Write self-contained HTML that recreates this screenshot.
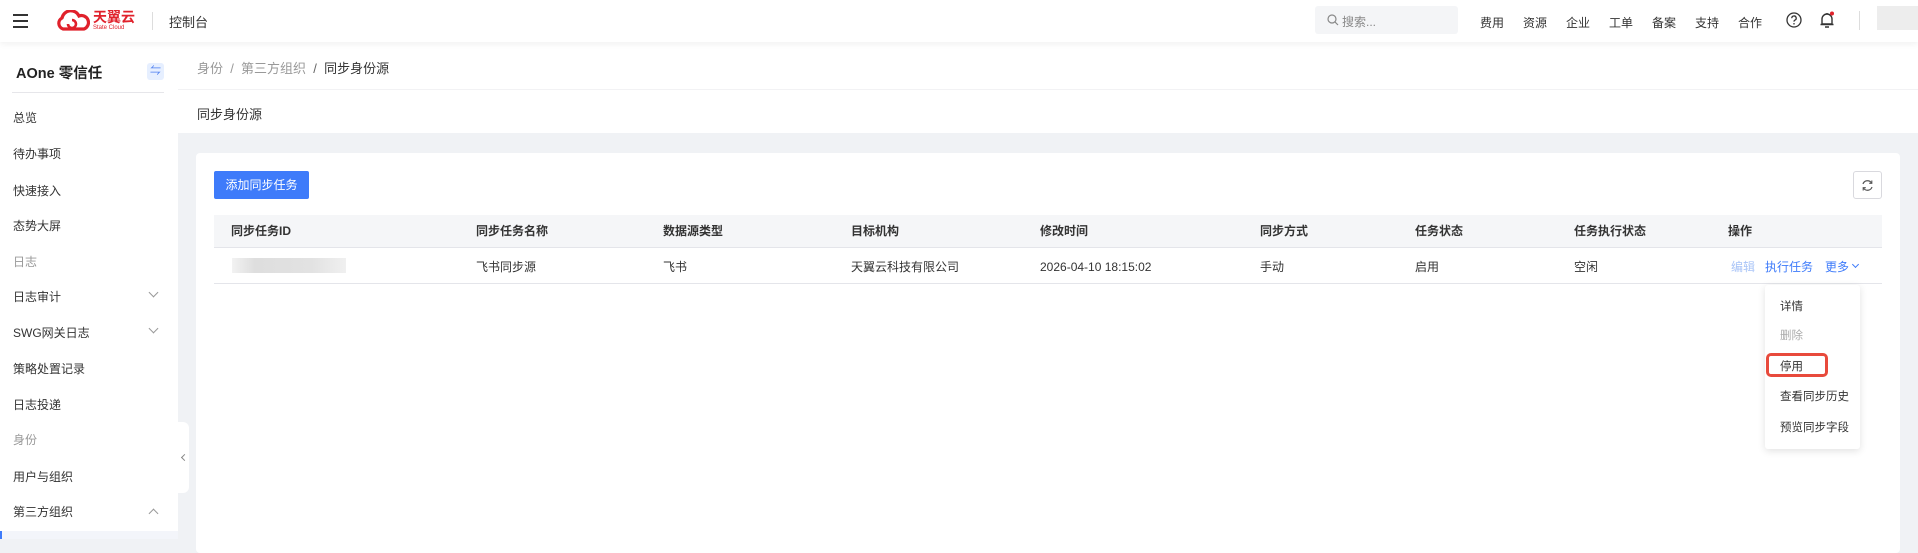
<!DOCTYPE html>
<html><head><meta charset="utf-8"><style>
*{margin:0;padding:0;box-sizing:border-box}
body{width:1918px;height:539px;overflow:hidden;background:#f0f2f5;font-family:"Liberation Sans","Noto Sans CJK SC",sans-serif;font-size:12px;color:#333;position:relative}
.abs{position:absolute}
.hdr{left:0;top:0;width:1918px;height:42px;background:#fff;box-shadow:0 2px 6px rgba(0,0,0,.06);z-index:5}
.side{left:0;top:42px;width:178px;height:497px;background:#fff}
.mi{position:absolute;left:13px;font-size:12px;color:#333;line-height:14px}
.grey{color:#999}
.chev{position:absolute;left:150px;width:7px;height:7px;border-right:1px solid #999;border-bottom:1px solid #999}
.th{position:absolute;top:224px;font-weight:bold;color:#333;line-height:14px}
.td{position:absolute;top:260px;color:#333;line-height:14px}
.nav{position:absolute;top:14px;font-size:12px;color:#333}
.dd{position:absolute;left:1780px;line-height:14px;color:#333;font-size:11.5px}
</style></head><body>
<div class="abs hdr">
  <div class="abs" style="left:13px;top:14px;width:15px;height:2px;background:#333"></div>
  <div class="abs" style="left:13px;top:20px;width:15px;height:2px;background:#333"></div>
  <div class="abs" style="left:13px;top:26px;width:15px;height:2px;background:#333"></div>
  <svg class="abs" style="left:54px;top:10px" width="36" height="22" viewBox="0 0 36 22"><path d="M9 19 A6 6 0 0 1 8 8 A9 9 0 0 1 25 6 A6.5 6.5 0 0 1 30 19 Z" fill="none" stroke="#e0212b" stroke-width="3.2"/><path d="M14 14 a4 4 0 1 0 4-4" fill="none" stroke="#e0212b" stroke-width="2.6"/></svg>
  <div class="abs" style="left:93px;top:9px;font-size:14px;font-weight:bold;color:#e0212b;line-height:16px">天翼云</div>
  <div class="abs" style="left:93px;top:25px;font-size:6px;color:#e0212b;line-height:7px">State Cloud</div>
  <div class="abs" style="left:152px;top:12px;width:1px;height:18px;background:#ddd"></div>
  <div class="abs" style="left:169px;top:12px;font-size:13px;color:#333">控制台</div>
  <div class="abs" style="left:1315px;top:6px;width:143px;height:28px;background:#f4f5f7;border-radius:3px"></div>
  <svg class="abs" style="left:1327px;top:14px" width="12" height="12" viewBox="0 0 12 12"><circle cx="5" cy="5" r="4" fill="none" stroke="#888" stroke-width="1.2"/><path d="M8 8 L11 11" stroke="#888" stroke-width="1.2"/></svg>
  <div class="abs" style="left:1342px;top:13px;color:#888">搜索...</div>
  <div class="nav" style="left:1480px">费用</div><div class="nav" style="left:1523px">资源</div><div class="nav" style="left:1566px">企业</div><div class="nav" style="left:1609px">工单</div><div class="nav" style="left:1652px">备案</div><div class="nav" style="left:1695px">支持</div><div class="nav" style="left:1738px">合作</div>
  <svg class="abs" style="left:1786px;top:12px" width="16" height="16" viewBox="0 0 16 16"><circle cx="8" cy="8" r="7" fill="none" stroke="#333" stroke-width="1.3"/><path d="M5.8 6.2a2.2 2.2 0 1 1 3 2c-.6.3-.8.7-.8 1.4" fill="none" stroke="#333" stroke-width="1.3"/><circle cx="8" cy="11.8" r=".8" fill="#333"/></svg>
  <svg class="abs" style="left:1819px;top:11px" width="16" height="18" viewBox="0 0 16 18"><path d="M3 13 V8 a5 5 0 0 1 10 0 V13 Z M1.5 13.5 H14.5 M6 16 H10 M8 2 V3" fill="none" stroke="#333" stroke-width="1.4"/><circle cx="13" cy="2.5" r="2" fill="#e0212b"/></svg>
  <div class="abs" style="left:1859px;top:11px;width:1px;height:19px;background:#ddd"></div>
  <div class="abs" style="left:1877px;top:6px;width:41px;height:24px;background:#ededed"></div>
</div>
<div class="abs side">
  <div class="abs" style="left:16px;top:20px;font-size:14.5px;font-weight:bold;color:#222">AOne 零信任</div>
  <div class="abs" style="left:147px;top:21px;width:17px;height:17px;background:#e6efff;border-radius:3px;color:#4a7cf0;font-size:11px;text-align:center;line-height:17px">⇋</div>
  <div class="abs" style="left:12px;top:50px;width:152px;height:1px;background:#e6e6ea"></div>
</div>
<div class="mi" style="top:111px">总览</div>
<div class="mi" style="top:147px">待办事项</div>
<div class="mi" style="top:184px">快速接入</div>
<div class="mi" style="top:219px">态势大屏</div>
<div class="mi grey" style="top:255px">日志</div>
<div class="mi" style="top:290px">日志审计</div><div class="chev" style="top:289px;transform:rotate(45deg)"></div>
<div class="mi" style="top:326px">SWG网关日志</div><div class="chev" style="top:325px;transform:rotate(45deg)"></div>
<div class="mi" style="top:362px">策略处置记录</div>
<div class="mi" style="top:398px">日志投递</div>
<div class="mi grey" style="top:433px">身份</div>
<div class="mi" style="top:470px">用户与组织</div>
<div class="mi" style="top:505px">第三方组织</div><div class="chev" style="top:510px;transform:rotate(-135deg)"></div>
<div class="abs" style="left:0;top:531px;width:178px;height:8px;background:#f3f5fa;border-left:2px solid #3e7bfa"></div>
<div class="abs" style="left:178px;top:422px;width:11px;height:71px;background:#fff;border-radius:0 6px 6px 0"></div>
<div class="abs" style="left:182px;top:455px;width:5px;height:5px;border-left:1px solid #888;border-bottom:1px solid #888;transform:rotate(45deg)"></div>

<div class="abs" style="left:178px;top:42px;width:1740px;height:47px;background:#fff"></div>
<div class="abs" style="left:197px;top:58px;font-size:13px;color:#999">身份 &nbsp;/ &nbsp;第三方组织 &nbsp;<span style="color:#666">/</span> &nbsp;<span style="color:#333">同步身份源</span></div>
<div class="abs" style="left:178px;top:89px;width:1740px;height:44px;background:#fff;border-top:1px solid #f2f2f4"></div>
<div class="abs" style="left:197px;top:104px;font-size:13px;color:#333">同步身份源</div>

<div class="abs" style="left:196px;top:153px;width:1704px;height:400px;background:#fff;border-radius:4px"></div>
<div class="abs" style="left:214px;top:171px;width:95px;height:28px;background:#3e7bfa;border-radius:2px;color:#fff;text-align:center;line-height:28px">添加同步任务</div>
<div class="abs" style="left:1853px;top:171px;width:29px;height:28px;border:1px solid #d9d9de;border-radius:3px"></div>
<svg class="abs" style="left:1861px;top:179px" width="13" height="13" viewBox="0 0 13 13"><path d="M2 5 A4.7 4.7 0 0 1 10.5 4 M11 8 A4.7 4.7 0 0 1 2.5 9" fill="none" stroke="#555" stroke-width="1.2"/><path d="M10.8 1.5 V4.3 H8.2 M2.2 11.5 V8.7 H4.8" fill="none" stroke="#555" stroke-width="1.1"/></svg>
<div class="abs" style="left:214px;top:215px;width:1668px;height:33px;background:#f5f6f8;border-bottom:1px solid #e4e5ea"></div>
<div class="th" style="left:231px">同步任务ID</div><div class="th" style="left:476px">同步任务名称</div><div class="th" style="left:663px">数据源类型</div><div class="th" style="left:851px">目标机构</div><div class="th" style="left:1040px">修改时间</div><div class="th" style="left:1260px">同步方式</div><div class="th" style="left:1415px">任务状态</div><div class="th" style="left:1574px">任务执行状态</div><div class="th" style="left:1728px">操作</div>
<div class="abs" style="left:214px;top:283px;width:1668px;height:1px;background:#e4e5ea"></div>
<div class="abs" style="left:232px;top:258px;width:114px;height:15px;background:linear-gradient(90deg,#f2f2f2,#dedede 20%,#e2e2e2 70%,#f0f0f0)"></div>
<div class="td" style="left:476px">飞书同步源</div><div class="td" style="left:663px">飞书</div><div class="td" style="left:851px">天翼云科技有限公司</div><div class="td" style="left:1040px">2026-04-10 18:15:02</div><div class="td" style="left:1260px">手动</div><div class="td" style="left:1415px">启用</div><div class="td" style="left:1574px">空闲</div>
<div class="td" style="left:1731px;color:#a9c4f7">编辑</div><div class="td" style="left:1765px;color:#3e7bfa">执行任务</div><div class="td" style="left:1825px;color:#3e7bfa">更多</div>
<div class="abs" style="left:1853px;top:262px;width:5px;height:5px;border-right:1px solid #3e7bfa;border-bottom:1px solid #3e7bfa;transform:rotate(45deg)"></div>

<div class="abs" style="left:1765px;top:285px;width:95px;height:164px;background:#fff;border-radius:3px;box-shadow:0 2px 8px rgba(0,0,0,.12)"></div>
<div class="dd" style="top:300px">详情</div>
<div class="dd" style="top:329px;color:#aaa">删除</div>
<div class="dd" style="top:360px">停用</div>
<div class="abs" style="left:1766px;top:353px;width:62px;height:24px;border:3px solid #e84a3c;border-radius:5px"></div>
<div class="dd" style="top:390px">查看同步历史</div>
<div class="dd" style="top:421px">预览同步字段</div>
</body></html>
